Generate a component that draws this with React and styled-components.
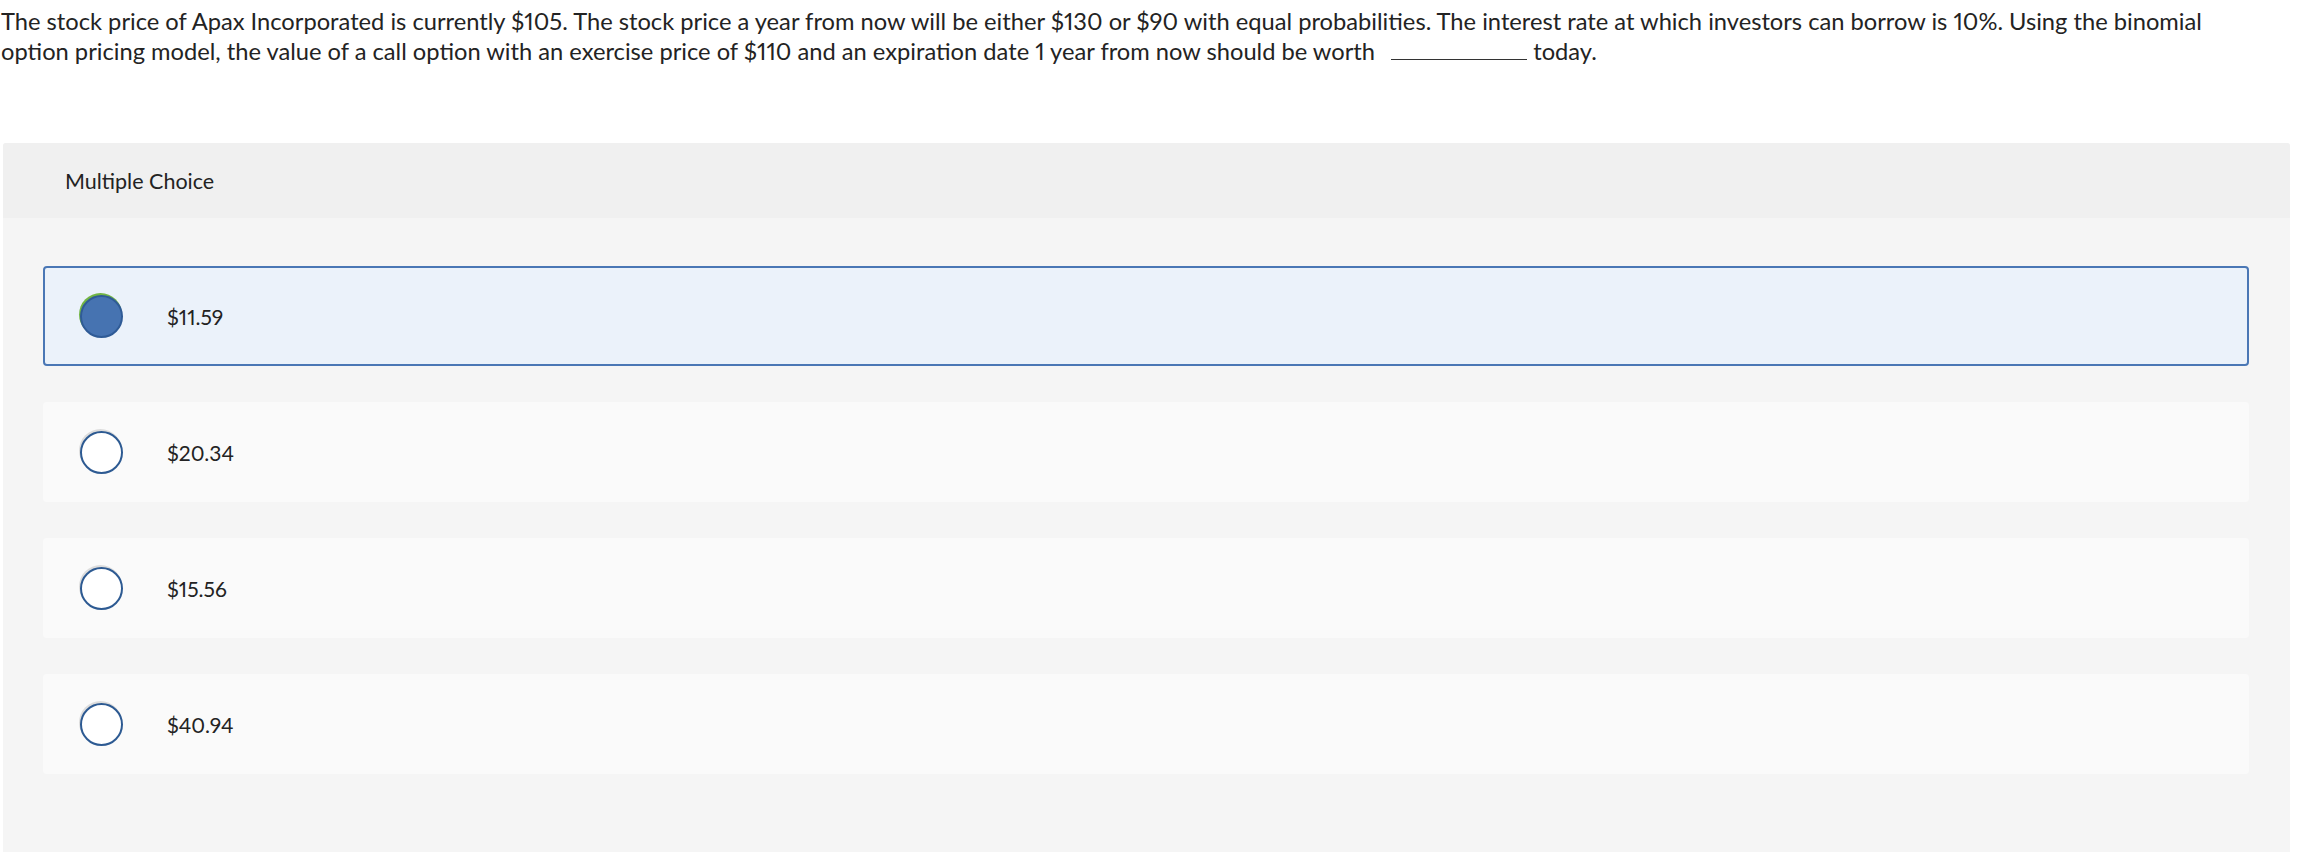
import React from "react";
import styled, { createGlobalStyle } from "styled-components";

const GlobalStyle = createGlobalStyle`
  html, body {
    margin: 0;
    padding: 0;
    background: #ffffff;
  }
  body {
    font-family: Lato, "Open Sans", Arial, sans-serif;
    color: #232323;
  }
`;

const Page = styled.div`
  padding-left: 3px;
  width: 2287px;
`;

const Question = styled.p`
  margin: 0;
  padding-top: 6px;
  margin-left: -2px;
  font-size: 23.7px;
  line-height: 30px;
  color: #232323;
  max-width: 2240px;
  font-variant-numeric: proportional-nums;
`;

const Blank = styled.span`
  display: inline-block;
  width: 136px;
  height: 0.8em;
  margin-left: 10px;
  border-bottom: 1px solid #333;
  vertical-align: baseline;
`;

const Panel = styled.section`
  margin-top: 77px;
  background: #f5f5f5;
  border-radius: 3px;
  min-height: 720px;
  overflow: hidden;
`;

const Header = styled.div`
  height: 75px;
  display: flex;
  align-items: center;
  padding-left: 62px;
  background: #f0f0f0;
  font-size: 21.5px;
  color: #232323;
`;

const Choices = styled.div`
  display: flex;
  flex-direction: column;
  gap: 36px;
  padding: 48px 41px 0 40px;
`;

const Choice = styled.label`
  box-sizing: border-box;
  height: 100px;
  display: flex;
  align-items: center;
  gap: 44px;
  padding-left: 35px;
  border-radius: 4px;
  border: 2px solid ${(p) => (p.$selected ? "#4a77b5" : "transparent")};
  background: ${(p) => (p.$selected ? "#ebf2fa" : "#fafafa")};
  cursor: pointer;
`;

const Radio = styled.span`
  box-sizing: border-box;
  flex: 0 0 auto;
  width: 43px;
  height: 43px;
  border-radius: 50%;
  border: 2px solid ${(p) => (p.$selected ? "#2f5b96" : "#2d5a92")};
  background: ${(p) => (p.$selected ? "#4673b1" : "#ffffff")};
  box-shadow: -1px -2px 0 0
    ${(p) => (p.$selected ? "#72b544" : "#dcdcdc")};
`;

const Answer = styled.span`
  font-size: 21px;
  color: #232323;
  font-variant-numeric: proportional-nums;
`;

const choices = ["$11.59", "$20.34", "$15.56", "$40.94"];

export default function App() {
  const selected = 0;
  return (
    <Page>
      <GlobalStyle />
      <Question>
        The stock price of Apax Incorporated is currently $105. The stock price a
        year from now will be either $130 or $90 with equal probabilities. The
        interest rate at which investors can borrow is 10%. Using the binomial
        option pricing model, the value of a call option with an exercise price
        of $110 and an expiration date 1 year from now should be worth{" "}
        <Blank />{" "}
        today.
      </Question>
      <Panel>
        <Header>Multiple Choice</Header>
        <Choices>
          {choices.map((c, i) => (
            <Choice key={c} $selected={i === selected}>
              <Radio $selected={i === selected} />
              <Answer>{c}</Answer>
            </Choice>
          ))}
        </Choices>
      </Panel>
    </Page>
  );
}
